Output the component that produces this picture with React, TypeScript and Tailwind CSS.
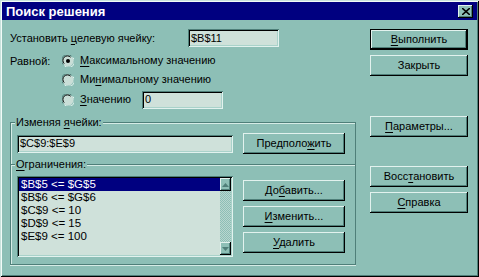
const raised =
  'shadow-[inset_-1px_-1px_#000,inset_1px_1px_#e2f2ee,inset_-2px_-2px_#4f7f79]';
const sunken =
  'shadow-[inset_1px_1px_#4f7f79,inset_-1px_-1px_#e2f2ee,inset_2px_2px_#000,inset_-2px_-2px_#a9d2ca]';

function U({ children }: { children: string }) {
  return <span className="underline underline-offset-2">{children}</span>;
}

function Button({
  children,
  isDefault = false,
  className = '',
}: {
  children: React.ReactNode;
  isDefault?: boolean;
  className?: string;
}) {
  if (isDefault) {
    return (
      <div className={`h-[21px] border border-black ${className}`}>
        <div
          className={`flex h-full items-center justify-center bg-[#8dbfb6] ${raised}`}
        >
          {children}
        </div>
      </div>
    );
  }
  return (
    <div
      className={`flex h-[21px] items-center justify-center bg-[#8dbfb6] ${raised} ${className}`}
    >
      {children}
    </div>
  );
}

function Radio({ checked = false }: { checked?: boolean }) {
  return (
    <svg width="12" height="12" viewBox="0 0 12 12" className="shrink-0">
      <circle cx="6" cy="6" r="5.5" fill="#c9ded7" />
      <path d="M1.2 9.5A5.5 5.5 0 0 1 9.5 1.2" fill="none" stroke="#4f7f79" strokeWidth="1" />
      <path d="M2.2 8.6A4.3 4.3 0 0 1 8.6 2.2" fill="none" stroke="#000" strokeWidth="1" />
      <path d="M10.8 2.5A5.5 5.5 0 0 1 2.5 10.8" fill="none" stroke="#e2f2ee" strokeWidth="1" />
      {checked && <circle cx="6" cy="6" r="2" fill="#000" />}
    </svg>
  );
}

function Field({
  value,
  className = '',
}: {
  value: string;
  className?: string;
}) {
  return (
    <div
      className={`flex h-[18px] items-center bg-[#cfe1da] pl-[3px] text-black ${sunken} ${className}`}
    >
      {value}
    </div>
  );
}

function ScrollArrow({ up }: { up?: boolean }) {
  return (
    <div
      className={`flex h-[13px] w-[11px] items-center justify-center bg-[#8dbfb6] ${raised}`}
    >
      <svg width="7" height="4" viewBox="0 0 7 4">
        <path d={up ? 'M3.5 0L7 4H0Z' : 'M0 0H7L3.5 4Z'} fill="#4f7f79" />
      </svg>
    </div>
  );
}

export default function App() {
  const constraints = [
    '$B$5 <= $G$5',
    '$B$6 <= $G$6',
    '$C$9 <= 10',
    '$D$9 <= 15',
    '$E$9 <= 100',
  ];

  return (
    <div
      className="h-[277px] w-[479px] overflow-hidden bg-[#8dbfb6] p-[2px] text-[11px] leading-none text-black shadow-[inset_1px_1px_#c8e2dc,inset_-1px_-1px_#000,inset_2px_2px_#f2fbf8,inset_-2px_-2px_#4f7f79]"
      style={{ fontFamily: '"Liberation Sans", Arial, sans-serif' }}
    >
      {/* title bar */}
      <div className="flex h-[18px] items-center justify-between bg-[#000080] pl-[4px] pr-[4px]">
        <span className="text-[13px] font-bold text-white">Поиск решения</span>
        <div
          className={`flex h-[13px] w-[15px] items-center justify-center bg-[#8dbfb6] ${raised}`}
        >
          <svg width="8" height="7" viewBox="0 0 8 7">
            <path d="M0 0L8 7M8 0L0 7" stroke="#000" strokeWidth="1.6" />
          </svg>
        </div>
      </div>

      <div className="flex pl-[8px] pt-[9px]">
        {/* left side */}
        <div className="w-[346px]">
          <div className="flex h-[18px] items-center">
            <span className="w-[178px]">
              Установить <U>ц</U>елевую ячейку:
            </span>
            <Field value="$B$11" className="w-[91px]" />
          </div>

          <div className="mt-[4px] flex">
            <span className="mt-[5px] w-[52px]">Равной:</span>
            <div className="flex flex-col">
              <div className="flex h-[19px] items-center gap-[6px]">
                <Radio checked />
                <span>
                  <U>М</U>аксимальному значению
                </span>
              </div>
              <div className="flex h-[19px] items-center gap-[6px]">
                <Radio />
                <span>
                  Ми<U>н</U>имальному значению
                </span>
              </div>
              <div className="flex h-[21px] items-center gap-[6px]">
                <Radio />
                <span className="w-[56px]">
                  <U>З</U>начению
                </span>
                <Field value="0" className="w-[81px]" />
              </div>
            </div>
          </div>

          {/* changing cells */}
          <div className="relative mt-[12px] h-[42px] border-l border-r border-t border-[#4f7f79] shadow-[inset_1px_1px_#d6ece6]">
            <span className="absolute -top-[6px] left-[4px] bg-[#8dbfb6] px-[1px]">
              Изменяя <U>я</U>чейки:
            </span>
            <div className="flex items-center pl-[6px] pt-[10px]">
              <Field value="$C$9:$E$9" className="w-[216px]" />
              <Button className="ml-[10px] w-[102px]">
                <span>
                  Предполо<U>ж</U>ить
                </span>
              </Button>
            </div>
          </div>

          {/* constraints */}
          <div className="relative h-[101px] border border-[#4f7f79] shadow-[inset_1px_1px_#d6ece6,0_1px_#d6ece6]">
            <span className="absolute -top-[6px] left-[4px] bg-[#8dbfb6] px-[1px]">
              <U>О</U>граничения:
            </span>
            <div className="flex pl-[6px] pt-[11px]">
              <div
                className={`flex h-[81px] w-[216px] bg-[#cfe1da] p-[2px] ${sunken}`}
              >
                <div className="flex-1 text-[11.5px]">
                  {constraints.map((c, i) => (
                    <div
                      key={c}
                      className={`flex h-[13px] items-center pl-[2px] ${
                        i === 0 ? 'bg-[#000080] text-white' : ''
                      }`}
                    >
                      {c}
                    </div>
                  ))}
                </div>
                <div className="flex w-[11px] flex-col justify-between bg-[repeating-conic-gradient(#b9d6cf_0_25%,#8dbfb6_0_50%)] bg-[length:2px_2px]">
                  <ScrollArrow up />
                  <ScrollArrow />
                </div>
              </div>
              <div className="ml-[10px] mt-[4px] flex w-[102px] flex-col gap-[5px]">
                <Button>
                  <span>
                    До<U>б</U>авить...
                  </span>
                </Button>
                <Button>
                  <span>
                    <U>И</U>зменить...
                  </span>
                </Button>
                <Button>
                  <span>
                    <U>У</U>далить
                  </span>
                </Button>
              </div>
            </div>
          </div>
        </div>

        {/* right side buttons */}
        <div className="ml-[14px] flex w-[98px] flex-col">
          <Button isDefault>
            <span>
              <U>В</U>ыполнить
            </span>
          </Button>
          <Button className="mt-[5px]">Закрыть</Button>
          <Button className="mt-[40px]">
            <span>
              <U>П</U>араметры...
            </span>
          </Button>
          <Button className="mt-[29px]">
            <span>
              Восс<U>т</U>ановить
            </span>
          </Button>
          <Button className="mt-[5px]">
            <span>
              <U>С</U>правка
            </span>
          </Button>
        </div>
      </div>
    </div>
  );
}
